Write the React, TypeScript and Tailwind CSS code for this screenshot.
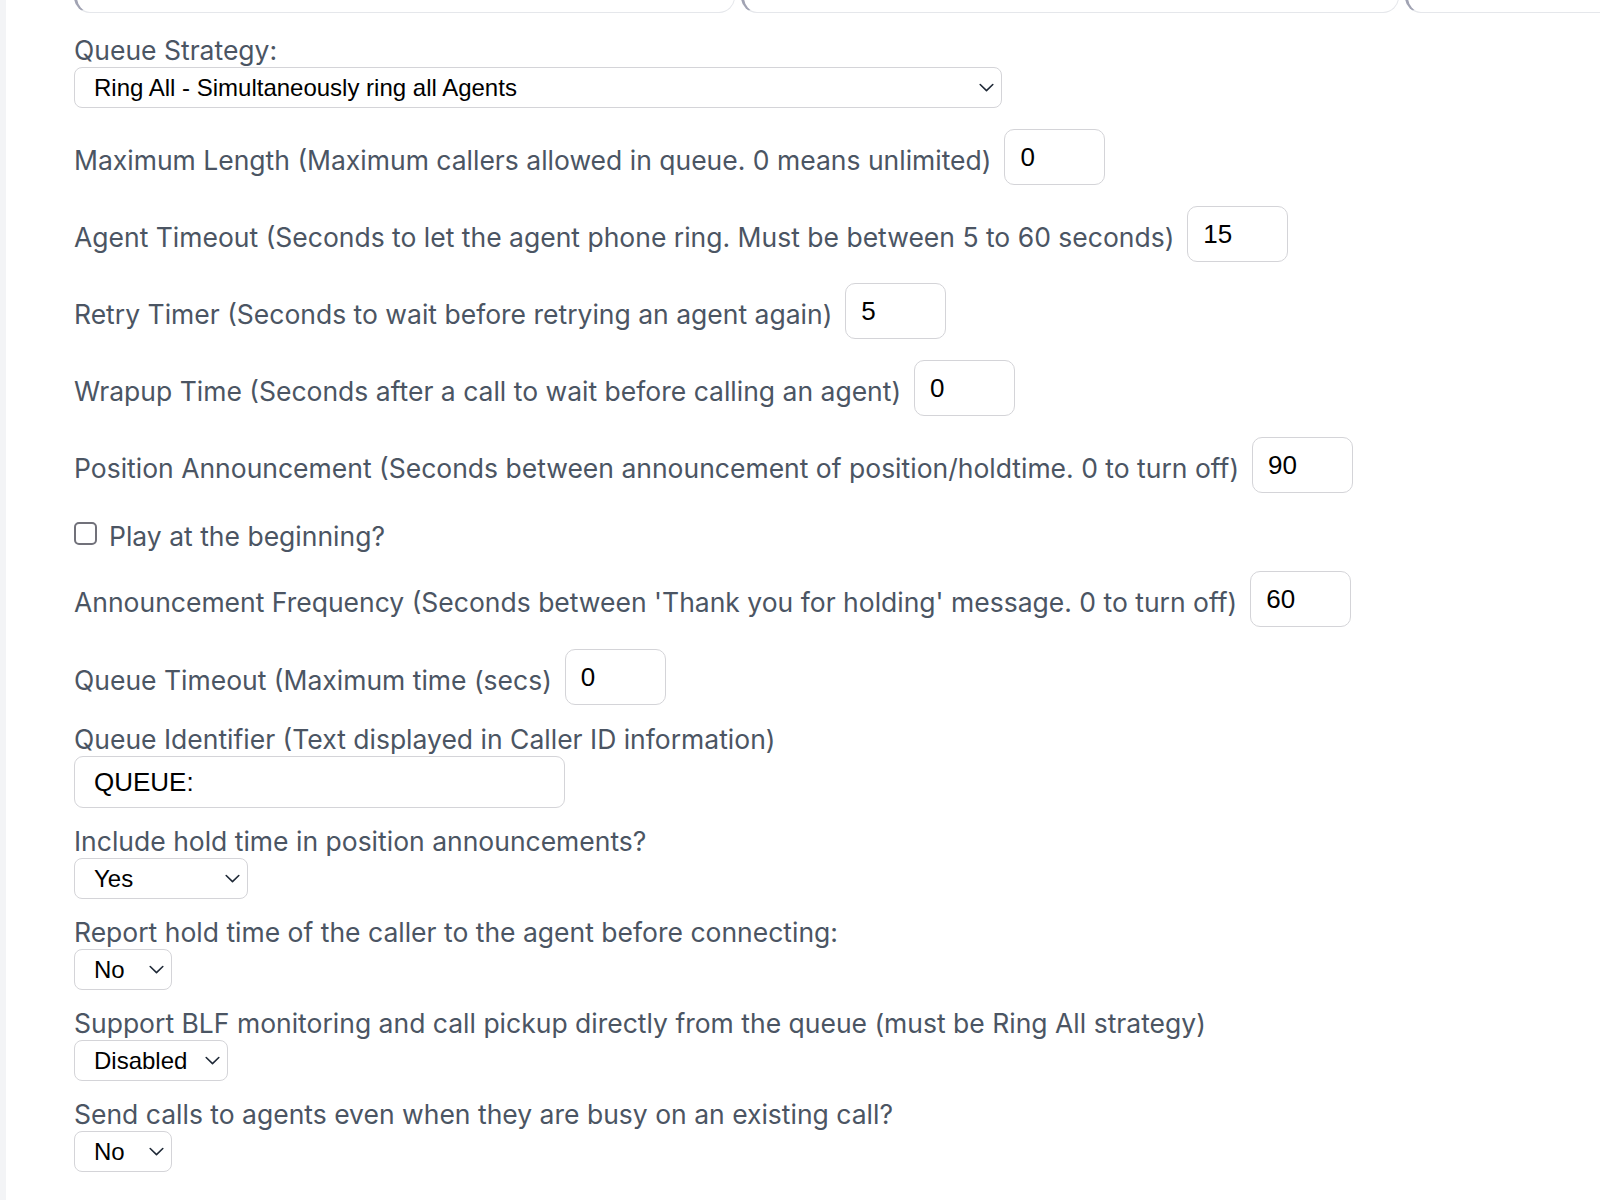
import React from "react";

const labelFont = { fontFamily: "Inter, 'Noto Sans', sans-serif" };
const valueFont = { fontFamily: "'Liberation Sans', Arial, sans-serif" };

function Chevron() {
  return (
    <svg width="15" height="9" viewBox="0 0 15 9" fill="none" className="shrink-0">
      <path d="M1.2 1.5 L7.5 7.6 L13.8 1.5" stroke="#1f2937" strokeWidth="1.6" strokeLinecap="round" strokeLinejoin="round" />
    </svg>
  );
}

function SelectBox({ value, width }: { value: string; width: string }) {
  return (
    <div
      className={`flex h-[41px] items-center justify-between rounded-[8px] border border-[#d4d4d8] bg-white pl-[19px] pr-[7px] text-[24px] text-black ${width}`}
      style={valueFont}
    >
      <span className="leading-none">{value}</span>
      <Chevron />
    </div>
  );
}

function NumberField({ value }: { value: string }) {
  return (
    <input
      readOnly
      value={value}
      className="h-[56px] w-[101px] shrink-0 rounded-[10px] border border-[#d4d4d8] bg-white px-[15px] text-[26px] text-black outline-none"
      style={valueFont}
    />
  );
}

function InlineRow({ label, value, mt = "mt-[21px]" }: { label: string; value: string; mt?: string }) {
  return (
    <div className={`flex h-[56px] items-center gap-[13px] ${mt}`}>
      <span className="pt-[6px] text-[26.5px] leading-[34px] whitespace-nowrap text-[#4b5563]">{label}</span>
      <NumberField value={value} />
    </div>
  );
}

function StackedSelect({ label, value, width }: { label: string; value: string; width: string }) {
  return (
    <div className="mt-[16px]">
      <div className="text-[26.5px] leading-[34px] whitespace-nowrap text-[#4b5563]">{label}</div>
      <SelectBox value={value} width={width} />
    </div>
  );
}

export default function App() {
  return (
    <div className="flex h-[1200px] w-[1600px] overflow-hidden bg-white" style={labelFont}>
      <div className="w-[6px] shrink-0 bg-[#f3f4f6]" />
      <div className="flex-1 pl-[68px]">
        {/* tab strip, only the bottom edge is on screen */}
        <div className="-mt-[27px] flex gap-[6px]">
          <div className="h-[40px] w-[661px] shrink-0 rounded-[16px] border border-[#e5e7eb] border-l-[3px] border-l-[#a1a3b3]" />
          <div className="h-[40px] w-[658px] shrink-0 rounded-[16px] border border-[#e5e7eb] border-l-[3px] border-l-[#a1a3b3]" />
          <div className="h-[40px] w-[661px] shrink-0 rounded-[16px] border border-[#e5e7eb] border-l-[3px] border-l-[#a1a3b3]" />
        </div>

        <div className="mt-[20px]">
          <div className="text-[26.5px] leading-[34px] text-[#4b5563]">Queue Strategy:</div>
          <SelectBox value="Ring All - Simultaneously ring all Agents" width="w-[928px]" />
        </div>

        <InlineRow label="Maximum Length (Maximum callers allowed in queue. 0 means unlimited)" value="0" />
        <InlineRow label="Agent Timeout (Seconds to let the agent phone ring. Must be between 5 to 60 seconds)" value="15" />
        <InlineRow label="Retry Timer (Seconds to wait before retrying an agent again)" value="5" />
        <InlineRow label="Wrapup Time (Seconds after a call to wait before calling an agent)" value="0" />
        <InlineRow label="Position Announcement (Seconds between announcement of position/holdtime. 0 to turn off)" value="90" />

        <label className="mt-[27px] flex h-[32px] items-center gap-[12px]">
          <span className="-mt-[5px] h-[23px] w-[23px] shrink-0 rounded-[5px] border-2 border-[#71717a] bg-white" />
          <span className="text-[26.5px] leading-[32px] text-[#4b5563]">Play at the beginning?</span>
        </label>

        <InlineRow
          label="Announcement Frequency (Seconds between 'Thank you for holding' message. 0 to turn off)"
          value="60"
          mt="mt-[19px]"
        />
        <InlineRow label="Queue Timeout (Maximum time (secs)" value="0" mt="mt-[22px]" />

        <div className="mt-[17px]">
          <div className="text-[26.5px] leading-[34px] text-[#4b5563]">Queue Identifier (Text displayed in Caller ID information)</div>
          <input
            readOnly
            value="QUEUE:"
            className="h-[52px] w-[491px] rounded-[9px] border border-[#d4d4d8] bg-white px-[19px] text-[26px] text-black outline-none"
            style={valueFont}
          />
        </div>

        <StackedSelect label="Include hold time in position announcements?" value="Yes" width="w-[174px]" />
        <StackedSelect label="Report hold time of the caller to the agent before connecting:" value="No" width="w-[98px]" />
        <StackedSelect
          label="Support BLF monitoring and call pickup directly from the queue (must be Ring All strategy)"
          value="Disabled"
          width="w-[154px]"
        />
        <StackedSelect label="Send calls to agents even when they are busy on an existing call?" value="No" width="w-[98px]" />
      </div>
    </div>
  );
}
